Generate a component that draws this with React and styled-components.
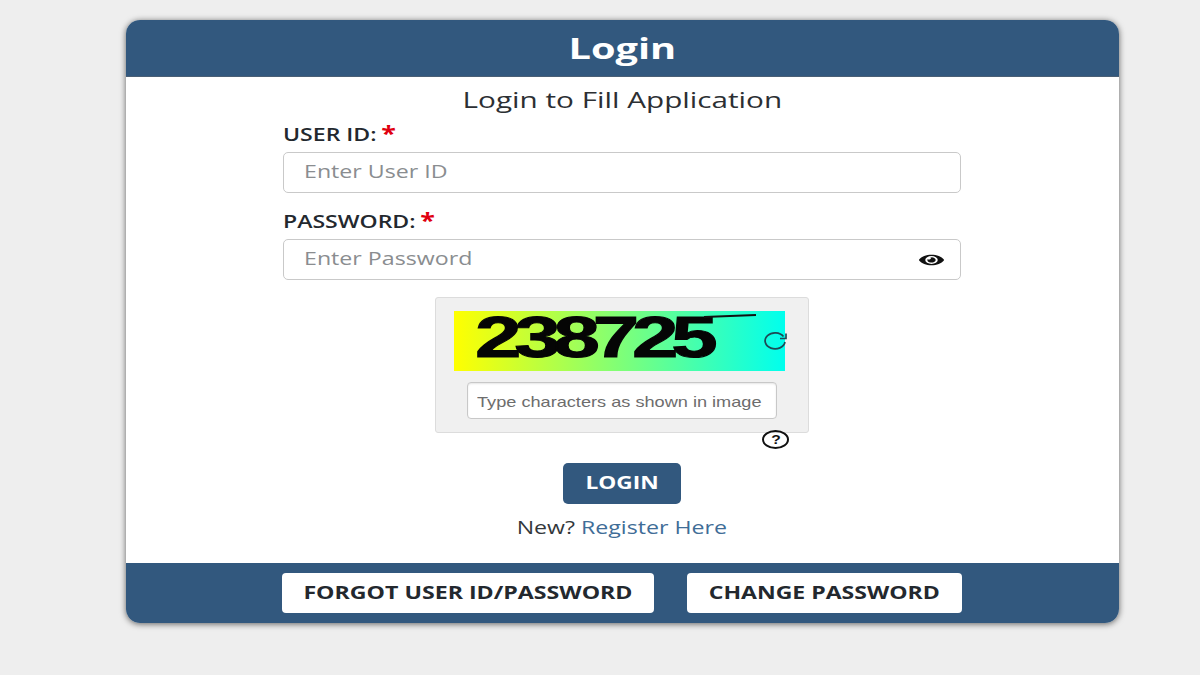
import React from 'react';
import styled, { createGlobalStyle } from 'styled-components';
import { FaEye } from 'react-icons/fa';

const GlobalStyle = createGlobalStyle`
  html, body {
    margin: 0;
    padding: 0;
    height: 675px;
    overflow: hidden;
    background: #eeeeee;
    font-family: "Open Sans", "Liberation Sans", sans-serif;
  }
  * { box-sizing: border-box; }
`;

// the whole screenshot is stretched sideways, so the glyphs are too
const Stretch = styled.span`
  display: inline-block;
  white-space: nowrap;
  transform: scaleX(${(p) => p.$x || 1.28});
  transform-origin: ${(p) => p.$origin || 'center'};
`;

const Page = styled.div`
  padding: 20px 0 0 126px;
`;

const Card = styled.div`
  width: 993px;
  height: 603px;
  display: flex;
  flex-direction: column;
  background: #fff;
  border-radius: 14px;
  box-shadow: 0 1px 6px rgba(0, 0, 0, 0.6);
`;

const Header = styled.div`
  height: 57px;
  flex: none;
  display: flex;
  align-items: center;
  justify-content: center;
  padding-bottom: 2px;
  background: #32587e;
  border-radius: 14px 14px 0 0;
  border-bottom: 1px solid #4a5f75;
  color: #fff;
  font-size: 29px;
  font-weight: 700;
`;

const Body = styled.div`
  flex: 1;
  display: flex;
  flex-direction: column;
  align-items: center;
`;

const Subtitle = styled.div`
  margin-top: 7px;
  font-size: 22px;
  line-height: 30px;
  color: #2c2f33;
`;

const Form = styled.div`
  width: 678px;
  margin-right: 1px;
`;

const Label = styled.div`
  height: ${(p) => p.$height}px;
  padding-top: ${(p) => p.$top}px;
  font-size: 18px;
  line-height: 26px;
  font-weight: 600;
  color: #23282e;
`;

const Star = styled.span`
  color: #e0000f;
  font-size: 21px;
  font-weight: 700;
  line-height: 20px;
  margin-left: -1px;
`;

const Field = styled.div`
  height: 41px;
  display: flex;
  align-items: center;
  justify-content: space-between;
  padding: 0 16px 3px 20px;
  background: #fff;
  border: 1px solid #c9c9c9;
  border-radius: 5px;
  color: #8a8d90;
  font-size: 19px;
`;

const Eye = styled(FaEye)`
  width: 25px;
  height: 14px;
  margin-top: 3px;
  color: #111;
`;

const CaptchaBox = styled.div`
  width: 374px;
  height: 136px;
  margin: 17px auto 0;
  padding: 13px 23px 0 18px;
  background: #f0f0f0;
  border: 1px solid #dcdcdc;
  border-radius: 3px;
`;

const CaptchaImage = styled.div`
  position: relative;
  width: 331px;
  height: 60px;
  padding: 0 0 8px 21px;
  display: flex;
  align-items: center;
  background: linear-gradient(90deg, #ffff00, #00ffee);
`;

const CaptchaCode = styled.span`
  font-family: "Liberation Sans", sans-serif;
  font-size: 58px;
  font-weight: 700;
  line-height: 58px;
  letter-spacing: -5px;
  color: #050505;
  -webkit-text-stroke: 1px #050505;
`;

const Strike = styled.i`
  position: absolute;
  top: 4px;
  left: 250px;
  width: 52px;
  height: 2px;
  background: #111;
  transform: rotate(-2deg);
`;

const RefreshIcon = styled.svg`
  position: absolute;
  right: -3px;
  top: 20px;
  width: 26px;
  height: 20px;
`;

const CaptchaInput = styled.div`
  width: 310px;
  height: 37px;
  margin: 11px 0 0 13px;
  padding: 2px 0 0 9px;
  display: flex;
  align-items: center;
  background: #fff;
  border: 1px solid #c8c8c8;
  border-radius: 4px;
  box-shadow: inset 0 1px 2px rgba(0, 0, 0, 0.1);
  font-family: "Liberation Sans", sans-serif;
  font-size: 15px;
  color: #6d6d6d;
`;

const HelpRow = styled.div`
  height: 30px;
  padding-right: 172px;
  display: flex;
  justify-content: flex-end;
  align-items: flex-start;
`;

const HelpIcon = styled.div`
  width: 27px;
  height: 19px;
  margin-top: -3px;
  display: flex;
  align-items: center;
  justify-content: center;
  border: 2px solid #111;
  border-radius: 50%;
  font-family: "Liberation Sans", sans-serif;
  font-size: 13px;
  font-weight: 700;
  color: #111;
`;

const LoginButton = styled.button`
  display: block;
  width: 118px;
  height: 41px;
  margin-right: 1px;
  padding: 0 0 3px;
  border: none;
  border-radius: 5px;
  background: #32587e;
  color: #fff;
  font-family: inherit;
  font-size: 18px;
  font-weight: 700;
`;

const NewLine = styled.div`
  margin: 10px 1px 0 0;
  font-size: 18px;
  line-height: 26px;
  color: #33373b;
`;

const RegisterLink = styled.a`
  color: #3f6d97;
`;

const Footer = styled.div`
  height: 60px;
  flex: none;
  display: flex;
  align-items: center;
  gap: 33px;
  padding-left: 156px;
  background: #32587e;
  border-radius: 0 0 14px 14px;
`;

const FooterButton = styled.button`
  width: ${(p) => p.$width}px;
  height: 40px;
  padding: 0 0 2px;
  border: none;
  border-radius: 4px;
  background: #fff;
  color: #23282e;
  font-family: inherit;
  font-size: 18px;
  font-weight: 700;
`;

const App = () => {
  return (
    <Page>
      <GlobalStyle />
      <Card>
        <Header>
          <Stretch $x={1.37}>Login</Stretch>
        </Header>
        <Body>
          <Subtitle>
            <Stretch $x={1.35}>Login to Fill Application</Stretch>
          </Subtitle>
          <Form>
            <Label $height={38} $top={7}>
              <Stretch $origin="left">
                USER ID: <Star>*</Star>
              </Stretch>
            </Label>
            <Field>
              <Stretch $x={1.22} $origin="left">Enter User ID</Stretch>
            </Field>
            <Label $height={46} $top={15}>
              <Stretch $origin="left">
                PASSWORD: <Star>*</Star>
              </Stretch>
            </Label>
            <Field>
              <Stretch $x={1.22} $origin="left">Enter Password</Stretch>
              <Eye preserveAspectRatio="none" />
            </Field>
            <CaptchaBox>
              <CaptchaImage>
                <Stretch $x={1.44} $origin="left">
                  <CaptchaCode>238725</CaptchaCode>
                </Stretch>
                <Strike />
                <RefreshIcon viewBox="0 0 26 20" fill="none" stroke="#1d4a55" strokeWidth="1.7">
                  <path d="M21.5 5.5A10 8 0 1 0 23 11" />
                  <path d="M24 2.5v5h-6" />
                </RefreshIcon>
              </CaptchaImage>
              <CaptchaInput>
                <Stretch $x={1.21} $origin="left">Type characters as shown in image</Stretch>
              </CaptchaInput>
            </CaptchaBox>
            <HelpRow>
              <HelpIcon>
                <Stretch $x={1.2}>?</Stretch>
              </HelpIcon>
            </HelpRow>
          </Form>
          <LoginButton>
            <Stretch $x={1.26}>LOGIN</Stretch>
          </LoginButton>
          <NewLine>
            <Stretch $x={1.285}>
              New? <RegisterLink>Register Here</RegisterLink>
            </Stretch>
          </NewLine>
        </Body>
        <Footer>
          <FooterButton $width={372}>
            <Stretch $x={1.286}>FORGOT USER ID/PASSWORD</Stretch>
          </FooterButton>
          <FooterButton $width={275}>
            <Stretch $x={1.28}>CHANGE PASSWORD</Stretch>
          </FooterButton>
        </Footer>
      </Card>
    </Page>
  );
};

export default App;
